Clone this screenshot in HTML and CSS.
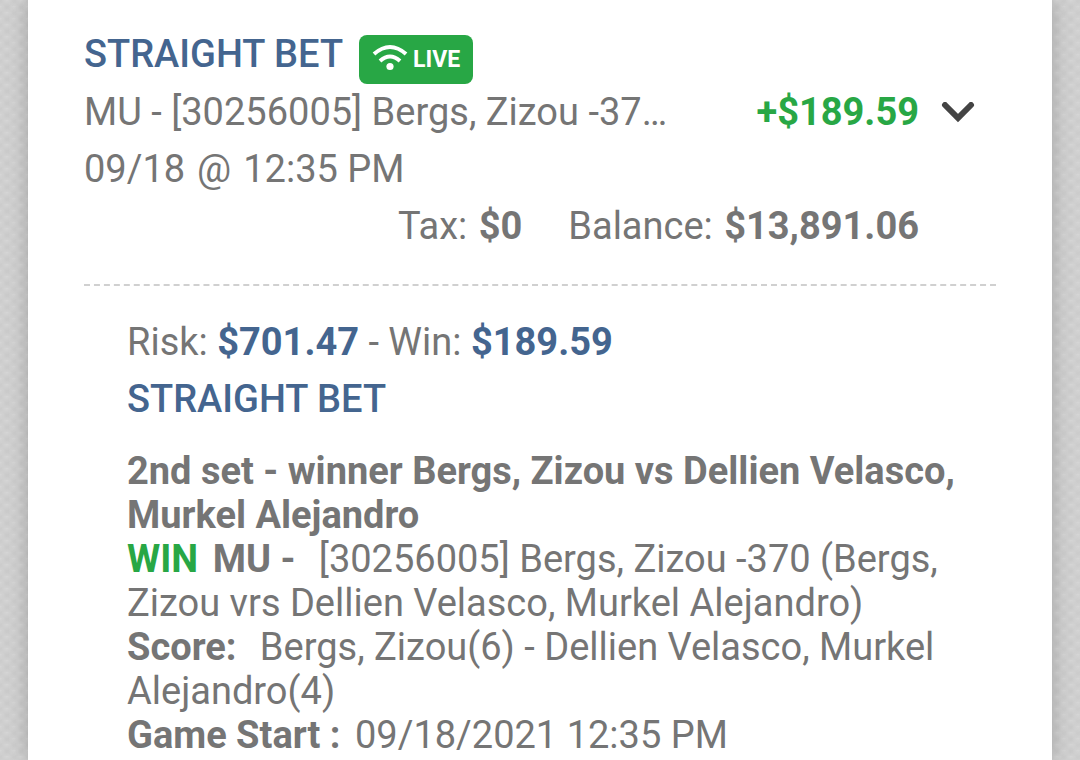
FILE: index.html
```
<!DOCTYPE html>
<html lang="en">
<head>
  <meta charset="UTF-8" />
  <meta name="viewport" content="width=device-width, initial-scale=1" />
  <title>Straight Bet</title>
  <link rel="stylesheet" href="styles.css">
</head>
<body>

  <main class="panel">
    <section class="summary">
      <div class="bet-title">
        <h1>STRAIGHT BET</h1>
        <span class="live">
          <svg viewBox="0 0 36 28" aria-hidden="true">
            <path d="M2 10Q18-4 34 10M8 17Q18 8 28 17" />
            <circle cx="18" cy="22.500" r="3.600" />
          </svg>
          LIVE
        </span>
      </div>
      <div class="bet-row">
        <p class="bet-name">MU - [30256005] Bergs, Zizou -370 (Bergs, Zizou vrs Dellien Velasco, Murkel Alejandro)</p>
        <strong class="amount">+$189.59</strong>
        <button class="toggle" type="button" aria-label="Hide bet details" aria-expanded="true">
          <svg viewBox="0 0 34 22" aria-hidden="true"><path d="M4 3l13 13L30 3" /></svg>
        </button>
      </div>
      <p class="date"><span>09/18</span> <span>@</span> <span>12:35 PM</span></p>
      <p class="totals">
        <span>Tax: <strong>$0</strong></span>
        <span>Balance: <strong>$13,891.06</strong></span>
      </p>
    </section>

    <section class="details">
      <p class="stake">Risk: <strong>$701.47</strong> - Win: <strong>$189.59</strong></p>
      <h2>STRAIGHT BET</h2>
      <div class="game">
        <p><strong>2nd set - winner Bergs, Zizou vs Dellien Velasco, Murkel Alejandro</strong></p>
        <p><strong class="win">WIN</strong> <strong class="label">MU -</strong> [30256005] Bergs, Zizou -370 (Bergs, Zizou vrs Dellien Velasco, Murkel Alejandro)</p>
        <p><strong class="label">Score:</strong> Bergs, Zizou(6) - Dellien Velasco, Murkel Alejandro(4)</p>
        <p><strong class="start">Game Start :</strong> 09/18/2021 12:35 PM</p>
      </div>
    </section>
  </main>

</body>
</html>
```
FILE: styles.css
```
* {
  box-sizing: border-box;
  margin: 0;
  padding: 0;
}
body {
  font-family: Roboto, sans-serif;
  font-size: 38px;
  line-height: 57px;
  color: #757575;
  background:
    radial-gradient(ellipse at 50% 60%, #cacaca 10%, transparent 70%) 0 0 / 14px 12px,
    radial-gradient(ellipse at 50% 60%, #cccccc 10%, transparent 70%) 7px 6px / 14px 12px,
    #d6d6d6;
  min-height: 100vh;
  display: flex;
  overflow: hidden;
}
strong {
  font-weight: 700;
}

.panel {
  flex: 1;
  min-width: 0;
  margin: 0 28px;
  padding: 26px 56px 0;
  background: #fff;
  box-shadow: 0 0 18px #00000038;
}

h1, h2 {
  font-size: 38px;
  font-weight: 500;
  color: #44658f;
}

/* Bet summary */
.summary {
  padding-bottom: 29px;
  border-bottom: 2px dashed #d0d0d0;
}
.bet-title {
  display: flex;
  align-items: flex-start;
  gap: 16px;
}
.live {
  display: flex;
  align-items: center;
  gap: 5px;
  height: 49px;
  margin-top: 9px;
  padding: 0 13px;
  border-radius: 8px;
  background: #28a745;
  color: #fff;
  font-size: 23px;
  font-weight: 700;
}
.live svg {
  width: 36px;
  height: 28px;
  margin-bottom: 4px;
  fill: none;
  stroke: #fff;
  stroke-width: 4px;
}
.live circle {
  fill: #fff;
  stroke: none;
}
.bet-row {
  display: flex;
  align-items: center;
}
.bet-name {
  flex: 1;
  overflow: hidden;
  white-space: nowrap;
  text-overflow: ellipsis;
  margin-right: 78px;
}
.amount, .win {
  color: #28a745;
}
.toggle {
  display: flex;
  width: 34px;
  margin: 0 21px 0 22px;
  border: none;
  background: none;
  cursor: pointer;
}
.toggle svg {
  width: 34px;
  height: 22px;
  fill: none;
  stroke: #444;
  stroke-width: 6px;
  stroke-linecap: round;
}
.date {
  display: flex;
  gap: 12px;
}
.totals {
  display: flex;
  justify-content: flex-end;
  gap: 46px;
  margin-right: 77px;
}
.totals strong {
  margin-left: 2px;
}

/* Bet details */
.details {
  padding: 28px 22px 0 43px;
}
.stake strong {
  color: #44658f;
}
.game {
  margin-top: 21px;
  line-height: 44px;
}
.win {
  margin-right: 5px;
}
.label {
  margin-right: 14px;
}
.start {
  margin-right: 5px;
}
```
